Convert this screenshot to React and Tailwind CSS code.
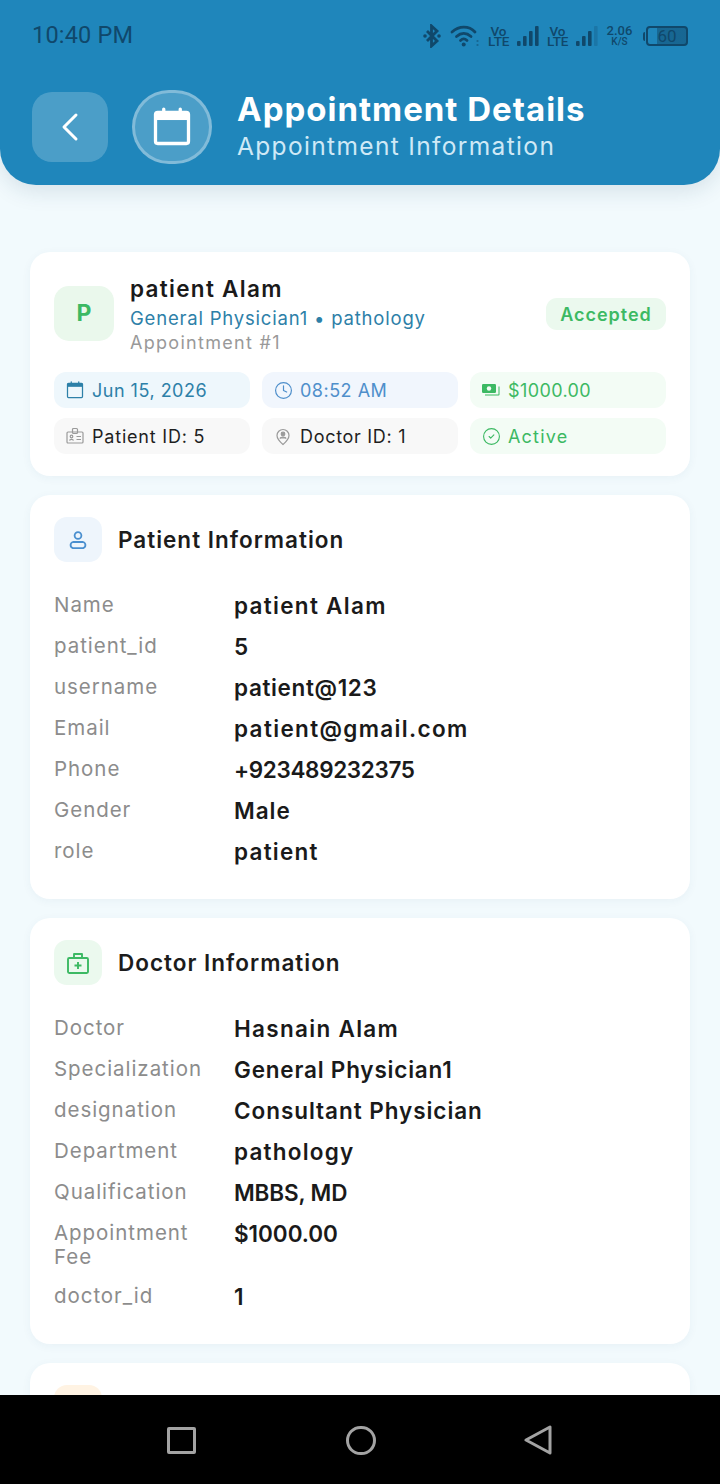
import React from "react";
import { ChevronLeft, Clock, CircleCheck } from "lucide-react";

const CalendarIcon = ({ className, stroke = 2 }) => (
  <svg viewBox="0 0 24 24" className={className} fill="none" stroke="currentColor" strokeWidth={stroke} strokeLinejoin="round">
    <rect x="3" y="4" width="18" height="17" rx="1.2" />
    <rect x="3" y="4" width="18" height="4.2" fill="currentColor" stroke="none" />
    <path d="M7.5 2.2v2.500M16.500 2.200v2.500" strokeLinecap="round" />
  </svg>
);

const MoneyIcon = ({ className }) => (
  <svg viewBox="0 0 20 20" className={className} fill="currentColor">
    <rect x="1" y="4" width="14" height="9" rx="1.2" />
    <circle cx="8" cy="8.500" r="2.200" fill="#f3fcf5" />
    <path d="M17.500 6.500h1v8a1 1 0 0 1-1 1H4v-1h13.500z" />
  </svg>
);

const IdIcon = ({ className }) => (
  <svg viewBox="0 0 20 20" className={className} fill="none" stroke="currentColor" strokeWidth="1.200">
    <rect x="2" y="6" width="16" height="11" rx="1" />
    <rect x="7.500" y="2.500" width="5" height="5" rx="1" />
    <circle cx="6.500" cy="10.500" r="1.300" />
    <path d="M4.500 14.500c.4-1.500 3.600-1.500 4 0M11.500 10.500h4.500M11.500 13.500h4.500" />
  </svg>
);

const PinIcon = ({ className }) => (
  <svg viewBox="0 0 20 20" className={className} fill="none" stroke="currentColor" strokeWidth="1.200">
    <path d="M10 18.500c-3-2.600-6-5.400-6-9a6 6 0 0 1 12 0c0 3.600-3 6.400-6 9z" />
    <circle cx="10" cy="8" r="1.800" fill="currentColor" />
    <path d="M6.800 12.500c.8-1.800 5.600-1.800 6.400 0" fill="currentColor" />
  </svg>
);

const PersonIcon = ({ className }) => (
  <svg viewBox="0 0 20 18" className={className} fill="none" stroke="currentColor" strokeWidth="1.800">
    <circle cx="10" cy="4.500" r="3.400" />
    <path d="M5 11h10a3.200 3.200 0 0 1 0 6.200H5A3.200 3.200 0 0 1 5 11z" />
  </svg>
);

const BagIcon = ({ className }) => (
  <svg viewBox="0 0 24 22" className={className} fill="none" stroke="currentColor" strokeWidth="1.900" strokeLinejoin="round">
    <rect x="2" y="6" width="20" height="15" rx="1.200" />
    <path d="M8 6V2h8v4" />
    <path d="M12 10v7M8.500 13.500h7" />
  </svg>
);

const BluetoothIcon = () => (
  <svg viewBox="0 0 20 24" className="w-[20px] h-[24px]" fill="none" stroke="#10486b" strokeWidth="2.800">
    <path d="M5 7l10 10-5.500 5V2L15 7 5 17" />
    <circle cx="3" cy="12" r="1.800" fill="#10486b" stroke="none" />
    <circle cx="17" cy="12" r="1.800" fill="#10486b" stroke="none" />
  </svg>
);

const Wifi = () => (
  <svg viewBox="0 0 30 22" className="w-[30px] h-[22px]" fill="none" stroke="#10486b" strokeWidth="2.800" strokeLinecap="round">
    <path d="M2 7c7-6.500 17-6.500 23 0" />
    <path d="M6.500 11.500c4.500-4 10-4 14.500 0" />
    <path d="M10.500 15.500c2-2 4.500-2 6.500 0" />
    <circle cx="13.700" cy="19.500" r="2" fill="#10486b" stroke="none" />
    <path d="M27.500 15.500v1M27.500 19.500v1" strokeWidth="1.800" strokeLinecap="butt" />
  </svg>
);

const Signal = ({ faded }) => (
  <svg viewBox="0 0 22 20" className="w-[22px] h-[20px]" fill="#10486b">
    <rect x="0" y="15" width="3.600" height="5" rx="1" />
    <rect x="6" y="10" width="3.600" height="10" rx="1" />
    <rect x="12" y="5" width="3.600" height="15" rx="1" />
    <rect x="18" y="0" width="3.600" height="20" rx="1" opacity={faded ? 0.25 : 1} />
  </svg>
);

const Vo = () => (
  <div className="w-[21px] text-center font-[Roboto] font-medium text-[13.5px] leading-[10.5px] text-[#10486b] whitespace-pre-line">
    {"Vo\nLTE"}
  </div>
);

const Chip = ({ icon, text, bg, color, cls }) => (
  <div className={`h-[36px] rounded-[12px] flex items-center gap-[8px] pl-[12px] ${bg}`}>
    <span className="w-[18px] h-[18px] shrink-0 flex items-center justify-center">{icon}</span>
    <span className={`text-[18px] leading-none whitespace-nowrap pt-[2px] ${cls} ${color}`}>{text}</span>
  </div>
);

const Row = ({ label, value, track = "tracking-[0.95px]" }) => (
  <div className="flex items-start">
    <div className="w-[180px] shrink-0 pt-[1px] text-[20.500px] leading-[24px] tracking-[0.95px] text-[#8c8c8c] pr-3">{label}</div>
    <div className={`text-[22.500px] leading-[27px] font-semibold text-[#1a1a1a] whitespace-nowrap ${track}`}>{value}</div>
  </div>
);

const Section = ({ icon, iconBg, title, rows, cls }) => (
  <section className={`bg-white rounded-[20px] px-6 pt-[22px] shadow-[0_2px_10px_rgba(30,80,110,0.05)] ${cls}`}>
    <div className="flex items-center gap-4">
      <div className={`w-12 h-[45px] rounded-[13px] flex items-center justify-center ${iconBg}`}>{icon}</div>
      <h2 className="text-[22.500px] font-semibold tracking-[1px] text-[#1c1c1c]">{title}</h2>
    </div>
    <div className="mt-[30px] flex flex-col gap-[14px]">
      {rows.map(([l, v, t]) => (
        <Row key={l} label={l} value={v} track={t} />
      ))}
    </div>
  </section>
);

export default function App() {
  return (
    <div className="w-[720px] h-[1484px] flex flex-col bg-[#f2fafd] overflow-hidden font-[Inter,sans-serif]">
      <div className="flex-1 min-h-0 overflow-hidden">
        <header className="h-[185px] bg-[#1f86bb] rounded-b-[36px] shadow-[0_6px_22px_rgba(20,60,90,0.13)] px-8 flex flex-col">
          <div className="h-[70px] pt-[2px] flex items-center justify-between">
            <span className="font-[Roboto] text-[23.500px] text-[#10486b] tracking-[0.2px]">10:40 PM</span>
            <div className="flex items-center gap-[8px] text-[#10486b]">
              <BluetoothIcon />
              <Wifi />
              <Vo />
              <Signal />
              <Vo />
              <Signal faded />
              <div className="w-[27px] flex flex-col items-center font-[Roboto] font-medium leading-[11px]">
                <span className="text-[13px]">2.06</span>
                <span className="text-[10px]">K/S</span>
              </div>
              <div className="ml-[2px] flex items-center">
                <span className="w-[2px] h-[9px] bg-[#10486b] rounded-l-sm" />
                <div className="w-[42px] h-[20px] ml-[1px] border-2 border-[#10486b] rounded-[4px] flex items-center justify-center text-[17px] font-[Roboto] leading-none bg-[linear-gradient(90deg,transparent_25%,rgba(16,72,107,0.5)_25%)]">
                  60
                </div>
              </div>
            </div>
          </div>
          <div className="flex items-center mt-[18px]">
            <button className="w-[76px] h-[70px] rounded-[20px] bg-white/20 flex items-center justify-center text-white">
              <ChevronLeft size={48} strokeWidth={1.500} />
            </button>
            <div className="w-[80px] h-[74px] ml-6 rounded-full bg-white/20 border-[3px] border-white/30 flex items-center justify-center text-white">
              <CalendarIcon className="w-[44px] h-[44px]" stroke={1.800} />
            </div>
            <div className="ml-[25px] pt-[2px]">
              <h1 className="text-[33px] leading-[38px] font-bold tracking-[1px] text-white whitespace-nowrap">Appointment Details</h1>
              <p className="text-[24.500px] leading-[37px] tracking-[1.350px] text-[#cfe9f6] whitespace-nowrap">Appointment Information</p>
            </div>
          </div>
        </header>

        <main className="px-[30px] pt-[67px] flex flex-col gap-[19px]">
          <section className="h-[224px] bg-white rounded-[20px] px-6 pt-[20px] shadow-[0_2px_10px_rgba(30,80,110,0.05)]">
            <div className="flex items-start h-[100px]">
              <div className="w-[60px] h-[55px] mt-[14px] rounded-[15px] bg-[#eaf8ec] flex items-center justify-center text-[23px] font-bold text-[#3cb963]">P</div>
              <div className="ml-4 flex-1 pt-[1px]">
                <div className="text-[22.500px] leading-[32px] font-semibold tracking-[1.300px] text-[#1a1a1a] whitespace-nowrap">patient Alam</div>
                <div className="text-[18.500px] leading-[24px] tracking-[0.800px] text-[#2d80a8] mt-[1px] whitespace-nowrap">General Physician1 • pathology</div>
                <div className="text-[18px] leading-[24px] tracking-[1.300px] text-[#999999] mt-[1px] whitespace-nowrap">Appointment #1</div>
              </div>
              <div className="mt-[26px] h-[32px] w-[120px] rounded-[11px] bg-[#ebf9ee] flex items-center justify-center text-[18px] font-semibold tracking-[1px] text-[#3cb963]">Accepted</div>
            </div>
            <div className="grid grid-cols-3 gap-x-3 gap-y-[10px]">
              <Chip bg="bg-[#eef7fc]" color="text-[#2d80a8]" cls="tracking-[0.500px]" text="Jun 15, 2026" icon={<CalendarIcon className="w-[20px] h-[20px] shrink-0 text-[#2d80a8]" stroke={1.500} />} />
              <Chip bg="bg-[#f1f6fd]" color="text-[#4f8fcb]" cls="tracking-[0.500px]" text="08:52 AM" icon={<Clock size={19} strokeWidth={1.500} className="shrink-0 text-[#4f8fcb]" />} />
              <Chip bg="bg-[#f3fcf5]" color="text-[#3cb963]" cls="tracking-[0.400px]" text="$1000.00" icon={<MoneyIcon className="w-[20px] h-[20px] shrink-0 text-[#3cb963]" />} />
              <Chip bg="bg-[#f8f8f8]" color="text-[#1f1f1f]" cls="tracking-[0.800px]" text="Patient ID: 5" icon={<IdIcon className="w-[20px] h-[20px] shrink-0 text-[#9a9a9a]" />} />
              <Chip bg="bg-[#f8f8f8]" color="text-[#1f1f1f]" cls="tracking-[0.700px]" text="Doctor ID: 1" icon={<PinIcon className="w-[20px] h-[20px] shrink-0 text-[#9a9a9a]" />} />
              <Chip bg="bg-[#f3fcf5]" color="text-[#3cb963]" cls="tracking-[1.200px]" text="Active" icon={<CircleCheck size={19} strokeWidth={1.400} className="shrink-0 text-[#3cb963]" />} />
            </div>
          </section>

          <Section
            cls="h-[404px]"
            title="Patient Information"
            iconBg="bg-[#eef5fc]"
            icon={<PersonIcon className="w-[20px] h-[18px] text-[#4a8fcf]" />}
            rows={[
              ["Name", "patient Alam", "tracking-[1.300px]"],
              ["patient_id", "5"],
              ["username", "patient@123", "tracking-[0.650px]"],
              ["Email", "patient@gmail.com", "tracking-[1.350px]"],
              ["Phone", "+923489232375", "tracking-[-0.350px]"],
              ["Gender", "Male"],
              ["role", "patient", "tracking-[1.250px]"],
            ]}
          />

          <Section
            cls="h-[426px]"
            title="Doctor Information"
            iconBg="bg-[#ebf9ee]"
            icon={<BagIcon className="w-[24px] h-[22px] text-[#3cb963]" />}
            rows={[
              ["Doctor", "Hasnain Alam", "tracking-[1.300px]"],
              ["Specialization", "General Physician1", "tracking-[0.800px]"],
              ["designation", "Consultant Physician"],
              ["Department", "pathology", "tracking-[1.200px]"],
              ["Qualification", "MBBS, MD", "tracking-[-0.150px]"],
              ["Appointment Fee", "$1000.00", "tracking-[-0.050px]"],
              ["doctor_id", "1"],
            ]}
          />

          <section className="h-[120px] bg-white rounded-[20px] px-6 pt-[22px] shadow-[0_2px_10px_rgba(30,80,110,0.05)]">
            <div className="w-12 h-[45px] rounded-[13px] bg-[#fff3e3]" />
          </section>
        </main>
      </div>

      <nav className="h-[89px] shrink-0 bg-black flex items-center justify-center">
        <div className="flex items-center gap-[150px] pt-[1px] pr-[2px]">
          <span className="w-[29px] h-[27px] border-[3px] border-[#a3a3a3] rounded-[2px]" />
          <span className="w-[30px] h-[29px] border-[3px] border-[#a3a3a3] rounded-full" />
          <svg viewBox="0 0 28 30" className="w-[28px] h-[30px] ml-[-2px]" fill="none" stroke="#a3a3a3" strokeWidth="3" strokeLinejoin="round">
            <path d="M26 2v26L2 15z" />
          </svg>
        </div>
      </nav>
    </div>
  );
}
